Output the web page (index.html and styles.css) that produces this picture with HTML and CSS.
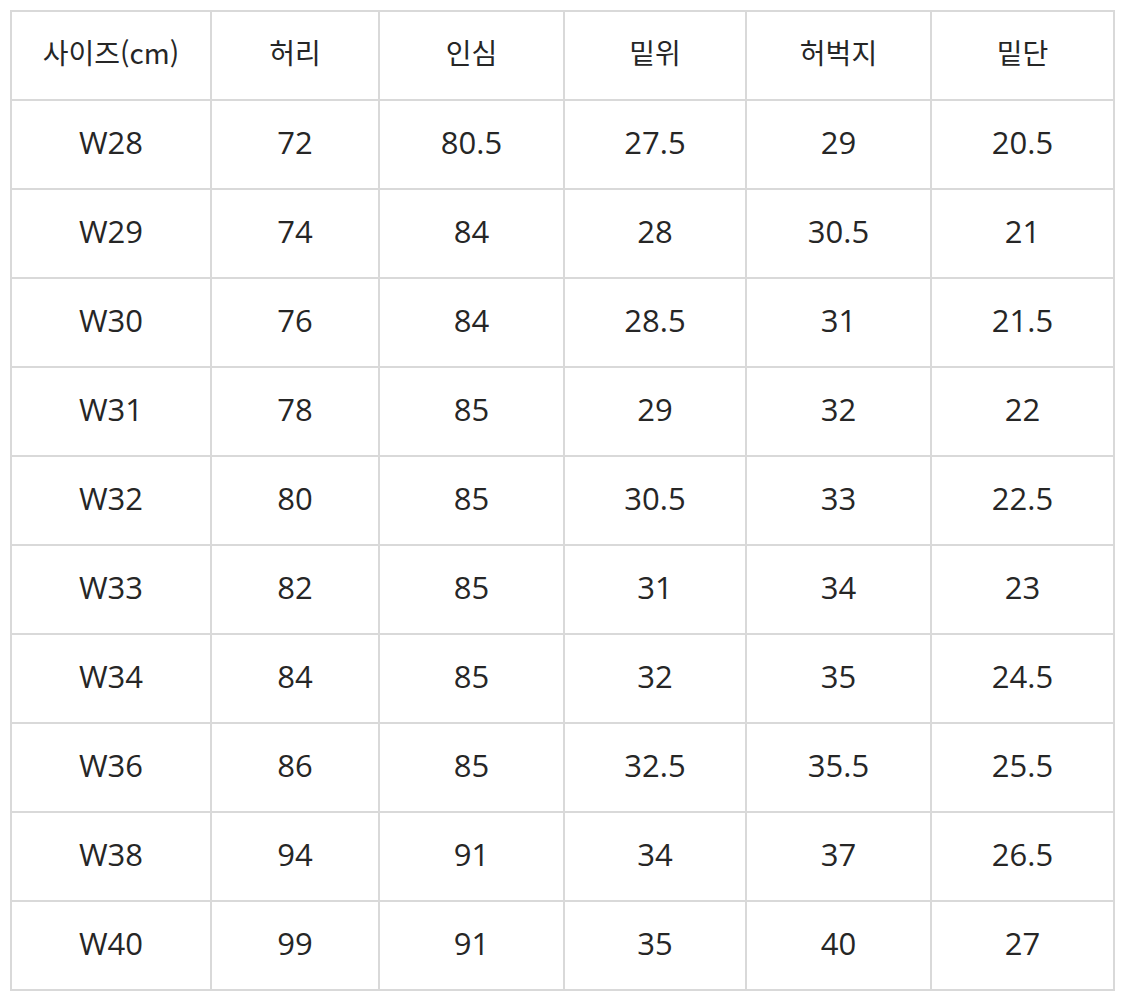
FILE: index.html
```html
<!DOCTYPE html>
<html lang="ko">
<head>
<meta charset="utf-8">
<link rel="stylesheet" href="styles.css">
</head>
<body>
<table class="size-table">
  <colgroup>
    <col class="c1"><col class="c2"><col class="c3"><col class="c4"><col class="c5"><col class="c6">
  </colgroup>
  <thead>
    <tr><th>사이즈(cm)</th><th>허리</th><th>인심</th><th>밑위</th><th>허벅지</th><th>밑단</th></tr>
  </thead>
  <tbody>
    <tr><td>W28</td><td>72</td><td>80.5</td><td>27.5</td><td>29</td><td>20.5</td></tr>
    <tr><td>W29</td><td>74</td><td>84</td><td>28</td><td>30.5</td><td>21</td></tr>
    <tr><td>W30</td><td>76</td><td>84</td><td>28.5</td><td>31</td><td>21.5</td></tr>
    <tr><td>W31</td><td>78</td><td>85</td><td>29</td><td>32</td><td>22</td></tr>
    <tr><td>W32</td><td>80</td><td>85</td><td>30.5</td><td>33</td><td>22.5</td></tr>
    <tr><td>W33</td><td>82</td><td>85</td><td>31</td><td>34</td><td>23</td></tr>
    <tr><td>W34</td><td>84</td><td>85</td><td>32</td><td>35</td><td>24.5</td></tr>
    <tr><td>W36</td><td>86</td><td>85</td><td>32.5</td><td>35.5</td><td>25.5</td></tr>
    <tr><td>W38</td><td>94</td><td>91</td><td>34</td><td>37</td><td>26.5</td></tr>
    <tr><td>W40</td><td>99</td><td>91</td><td>35</td><td>40</td><td>27</td></tr>
  </tbody>
</table>
</body>
</html>
```

FILE: styles.css
```css
html, body {
  margin: 0;
  padding: 0;
  background: #ffffff;
}
body {
  padding: 10px 0 0 10px;
  font-family: "Open Sans", "Noto Sans CJK KR", sans-serif;
  color: #262626;
}
.size-table {
  border-collapse: collapse;
  table-layout: fixed;
  width: 1103px;
}
.c1 { width: 200px; }
.c2 { width: 168px; }
.c3 { width: 185px; }
.c4 { width: 182px; }
.c5 { width: 185px; }
.c6 { width: 183px; }
.size-table th,
.size-table td {
  border: 2px solid #d9d9d9;
  text-align: center;
  vertical-align: middle;
  font-size: 31px;
  font-weight: 400;
  height: 89px;
  padding: 0 0 5px 0;
  box-sizing: border-box;
  line-height: 1;
}
.size-table thead th {
  height: 89px;
  font-size: 28px;
  padding-bottom: 8px;
  font-family: "Noto Sans CJK KR", "Open Sans", sans-serif;
}
```
